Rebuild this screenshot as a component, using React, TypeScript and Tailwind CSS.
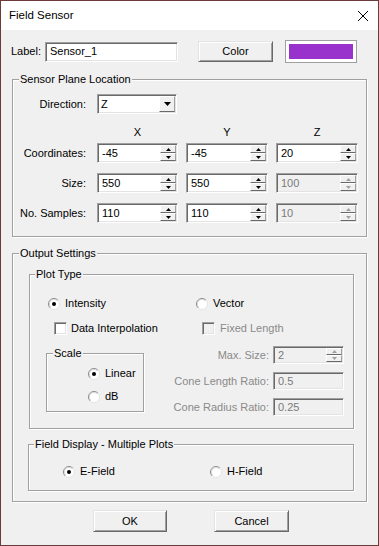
const sunken =
	'border border-t-[#a0a0a0] border-l-[#a0a0a0] border-b-white border-r-white shadow-[inset_1px_1px_0_#696969,inset_-1px_-1px_0_#e3e3e3]';
const raised =
	'border border-t-[#e3e3e3] border-l-[#e3e3e3] border-b-[#696969] border-r-[#696969] shadow-[inset_1px_1px_0_#fff,inset_-1px_-1px_0_#a0a0a0] bg-[#f0f0f0]';
const smallBtn =
	'border border-t-white border-l-white border-b-[#696969] border-r-[#a0a0a0] bg-[#f0f0f0]';
const group =
	'border border-[#a0a0a0] shadow-[inset_1px_1px_0_#fff,1px_1px_0_#fff]';
const grayText = 'text-[#8a8a8a]';

const Arrow = ({ up, color }: { up?: boolean; color: string }) => (
	<svg width="5" height="3" viewBox="0 0 5 3">
		<polygon points={up ? '2.5,0 5,3 0,3' : '0,0 5,0 2.5,3'} fill={color} />
	</svg>
);

const Spin = ({ disabled }: { disabled?: boolean }) => {
	const color = disabled ? '#a0a0a0' : '#000';
	return (
		<div className="my-[1px] mr-[1px] flex w-[16px] shrink-0 flex-col">
			<div className={`flex flex-1 items-center justify-center ${smallBtn}`}>
				<Arrow up color={color} />
			</div>
			<div className={`flex flex-1 items-center justify-center ${smallBtn}`}>
				<Arrow color={color} />
			</div>
		</div>
	);
};

interface FieldProps {
	value: string;
	className: string;
	spin?: boolean;
	disabled?: boolean;
}

const Field = ({ value, className, spin, disabled }: FieldProps) => (
	<div
		className={`flex ${sunken} ${className} ${
			disabled ? 'bg-[#f0f0f0] text-[#7a7a7a]' : 'bg-white'
		}`}
	>
		<span className="flex flex-1 items-center pl-[4px]">{value}</span>
		{spin && <Spin disabled={disabled} />}
	</div>
);

const Radio = ({ checked }: { checked?: boolean }) => (
	<svg width="12" height="12" viewBox="0 0 12 12" className="shrink-0">
		<circle cx="6" cy="6" r="5.5" fill="#fff" />
		<path d="M2.11 9.89 A5.5 5.5 0 0 1 9.89 2.11" fill="none" stroke="#8a8a8a" />
		<path d="M9.89 2.11 A5.5 5.5 0 0 1 2.11 9.89" fill="none" stroke="#e3e3e3" />
		<path d="M2.8 9.2 A4.5 4.5 0 0 1 9.2 2.8" fill="none" stroke="#d0d0d0" strokeWidth="0.8" />
		{checked && <circle cx="6" cy="6" r="2" fill="#000" />}
	</svg>
);

const Check = ({ disabled }: { disabled?: boolean }) => (
	<div
		className={`h-[13px] w-[13px] shrink-0 ${sunken} ${
			disabled ? 'bg-[#f0f0f0]' : 'bg-white'
		}`}
	/>
);

const Title = ({ text, className }: { text: string; className: string }) => (
	<span className={`-mt-[7px] block w-fit bg-[#f0f0f0] px-[1px] ${className}`}>
		{text}
	</span>
);

const App = () => {
	return (
		<div className="flex h-[546px] w-[379px] flex-col border border-[#6b3a3a] bg-[#f0f0f0] font-['Liberation_Sans',Arial,sans-serif] text-[11px] leading-[13px] text-black">
			{/* title bar */}
			<div className="flex h-[29px] shrink-0 items-center justify-between bg-white pl-[8px] pr-[10px]">
				<span className="text-[11.5px]">Field Sensor</span>
				<svg width="10" height="10" viewBox="0 0 10 10">
					<path d="M0 0 L10 10 M10 0 L0 10" stroke="#000" strokeWidth="1" />
				</svg>
			</div>

			{/* label row */}
			<div className="mt-[10px] flex h-[23px] items-center pl-[10px]">
				<span className="w-[34px]">Label:</span>
				<Field value="Sensor_1" className="h-[20px] w-[133px]" />
				<button
					className={`ml-[20px] flex h-[21px] w-[75px] items-center justify-center ${raised}`}
				>
					Color
				</button>
				<div className="ml-[12px] h-[23px] w-[72px] border border-[#a0a0a0] bg-white p-[3px]">
					<div className="h-full w-full bg-[#9932cc]" />
				</div>
			</div>

			{/* sensor plane location */}
			<div className={`ml-[11px] mt-[16px] w-[355px] pb-[13px] ${group}`}>
				<Title text="Sensor Plane Location" className="ml-[6px]" />
				<div className="mt-[8px] flex items-center">
					<span className="w-[73px] text-right">Direction:</span>
					<div className={`ml-[11px] flex h-[20px] w-[80px] bg-white ${sunken}`}>
						<span className="flex flex-1 items-center pl-[3px]">Z</span>
						<div className={`my-[1px] mr-[1px] flex w-[16px] items-center justify-center ${smallBtn}`}>
							<svg width="7" height="4" viewBox="0 0 7 4">
								<polygon points="0,0 7,0 3.5,4" fill="#000" />
							</svg>
						</div>
					</div>
				</div>
				<div className="mt-[12px] flex pl-[84px]">
					<span className="w-[81px] text-center">X</span>
					<span className="ml-[8px] w-[82px] text-center">Y</span>
					<span className="ml-[8px] w-[82px] text-center">Z</span>
				</div>
				{[
					{ label: 'Coordinates:', v: ['-45', '-45', '20'], last: false },
					{ label: 'Size:', v: ['550', '550', '100'], last: true },
					{ label: 'No. Samples:', v: ['110', '110', '10'], last: true },
				].map((row, i) => (
					<div
						key={row.label}
						className={`flex items-center ${i === 0 ? 'mt-[4px]' : 'mt-[10px]'}`}
					>
						<span className="w-[73px] text-right">{row.label}</span>
						<Field value={row.v[0]} spin className="ml-[11px] h-[20px] w-[81px]" />
						<Field value={row.v[1]} spin className="ml-[8px] h-[20px] w-[82px]" />
						<Field
							value={row.v[2]}
							spin
							disabled={row.last}
							className="ml-[8px] h-[20px] w-[82px]"
						/>
					</div>
				))}
			</div>

			{/* output settings */}
			<div className={`ml-[11px] mt-[16px] w-[355px] pb-[10px] ${group}`}>
				<Title text="Output Settings" className="ml-[6px]" />

				<div className={`ml-[16px] mt-[14px] w-[325px] pb-[12px] ${group}`}>
					<Title text="Plot Type" className="ml-[5px]" />
					<div className="mt-[16px] flex h-[13px] items-center">
						<div className="ml-[18px] flex w-[148px] items-center gap-[5px]">
							<Radio checked />
							<span>Intensity</span>
						</div>
						<div className="flex items-center gap-[5px]">
							<Radio />
							<span>Vector</span>
						</div>
					</div>
					<div className="mt-[12px] flex h-[13px] items-center">
						<div className="ml-[24px] flex w-[148px] items-center gap-[4px]">
							<Check />
							<span>Data Interpolation</span>
						</div>
						<div className="flex items-center gap-[5px]">
							<Check disabled />
							<span className={grayText}>Fixed Length</span>
						</div>
					</div>
					<div className="mt-[11px] flex items-start">
						<div className={`ml-[16px] mt-[7px] w-[98px] pb-[8px] ${group}`}>
							<Title text="Scale" className="ml-[6px]" />
							<div className="ml-[41px] mt-[7px] flex h-[13px] items-center gap-[5px]">
								<Radio checked />
								<span>Linear</span>
							</div>
							<div className="ml-[41px] mt-[10px] flex h-[13px] items-center gap-[5px]">
								<Radio />
								<span>dB</span>
							</div>
						</div>
						<div className="ml-auto mr-[9px] flex flex-col gap-[8px]">
							<div className="flex items-center justify-end">
								<span className={grayText}>Max. Size:</span>
								<Field value="2" spin disabled className="ml-[4px] h-[18px] w-[71px]" />
							</div>
							<div className="flex items-center justify-end">
								<span className={grayText}>Cone Length Ratio:</span>
								<Field value="0.5" disabled className="ml-[4px] h-[18px] w-[71px]" />
							</div>
							<div className="flex items-center justify-end">
								<span className={grayText}>Cone Radius Ratio:</span>
								<Field value="0.25" disabled className="ml-[4px] h-[18px] w-[71px]" />
							</div>
						</div>
					</div>
				</div>

				<div className={`ml-[15px] mt-[15px] w-[326px] pb-[12px] ${group}`}>
					<Title text="Field Display - Multiple Plots" className="ml-[5px]" />
					<div className="mt-[14px] flex h-[13px] items-center">
						<div className="ml-[34px] flex w-[147px] items-center gap-[5px]">
							<Radio checked />
							<span>E-Field</span>
						</div>
						<div className="flex items-center gap-[5px]">
							<Radio />
							<span>H-Field</span>
						</div>
					</div>
				</div>
			</div>

			{/* buttons */}
			<div className="mt-[8px] flex">
				<button className={`ml-[92px] flex h-[22px] w-[74px] items-center justify-center ${raised}`}>
					OK
				</button>
				<button className={`ml-[47px] flex h-[22px] w-[75px] items-center justify-center ${raised}`}>
					Cancel
				</button>
			</div>
		</div>
	);
};

export default App;
